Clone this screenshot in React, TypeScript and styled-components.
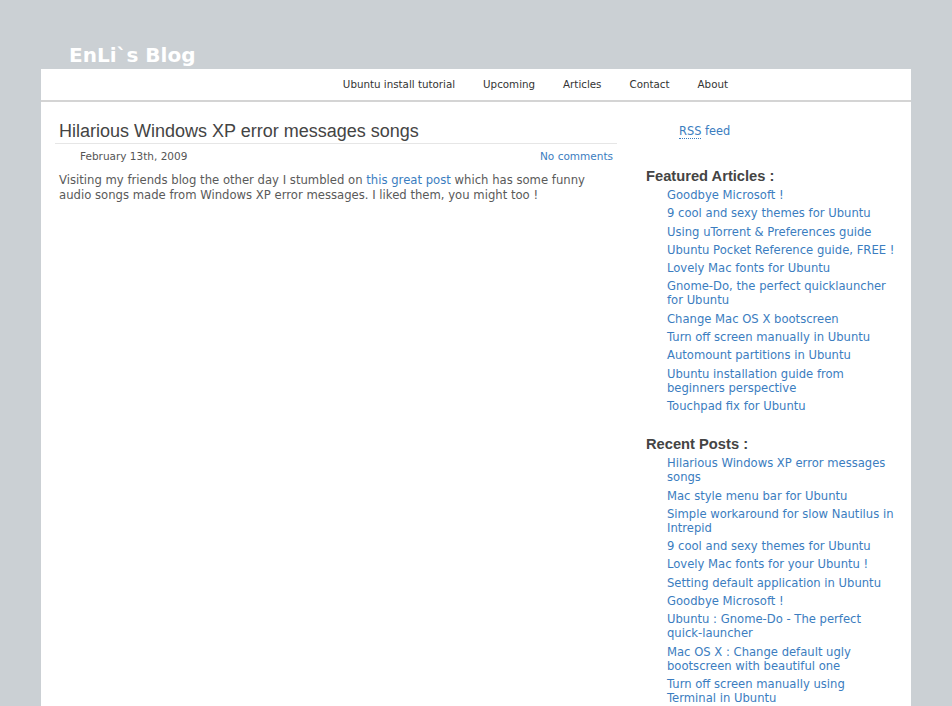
import React from "react";
import styled, { createGlobalStyle } from "styled-components";

const GlobalStyle = createGlobalStyle`
    html, body {
        margin: 0;
        padding: 0;
        background: #cbd0d4;
    }
    body {
        font-family: "DejaVu Sans", Verdana, sans-serif;
    }
`;

const featured = [
    "Goodbye Microsoft !",
    "9 cool and sexy themes for Ubuntu",
    "Using uTorrent & Preferences guide",
    "Ubuntu Pocket Reference guide, FREE !",
    "Lovely Mac fonts for Ubuntu",
    "Gnome-Do, the perfect quicklauncher for Ubuntu",
    "Change Mac OS X bootscreen",
    "Turn off screen manually in Ubuntu",
    "Automount partitions in Ubuntu",
    "Ubuntu installation guide from beginners perspective",
    "Touchpad fix for Ubuntu",
];

const recent = [
    "Hilarious Windows XP error messages songs",
    "Mac style menu bar for Ubuntu",
    "Simple workaround for slow Nautilus in Intrepid",
    "9 cool and sexy themes for Ubuntu",
    "Lovely Mac fonts for your Ubuntu !",
    "Setting default application in Ubuntu",
    "Goodbye Microsoft !",
    "Ubuntu : Gnome-Do - The perfect quick-launcher",
    "Mac OS X : Change default ugly bootscreen with beautiful one",
    "Turn off screen manually using Terminal in Ubuntu",
];

const navItems = ["Ubuntu install tutorial", "Upcoming", "Articles", "Contact", "About"];

const App = () => {
    return (
        <>
            <GlobalStyle />
            <Page>
                <Logo>EnLi`s Blog</Logo>
                <Wrapper>
                    <Nav>
                        {navItems.map(n => <NavLink key={n}>{n}</NavLink>)}
                    </Nav>
                    <Columns>
                        <Main>
                            <PostTitle>Hilarious Windows XP error messages songs</PostTitle>
                            <PostMeta>
                                <span>February 13th, 2009</span>
                                <Link>No comments</Link>
                            </PostMeta>
                            <PostBody>
                                Visiting my friends blog the other day I stumbled on <Link>this great post</Link> which has some funny audio songs made from Windows XP error messages. I liked them, you might too !
                            </PostBody>
                        </Main>
                        <Sidebar>
                            <Rss><Abbr>RSS</Abbr> feed</Rss>
                            <WidgetTitle>Featured Articles :</WidgetTitle>
                            <LinkList>
                                {featured.map(f => <LinkItem key={f}><Link>{f}</Link></LinkItem>)}
                            </LinkList>
                            <WidgetTitle $second>Recent Posts :</WidgetTitle>
                            <LinkList>
                                {recent.map(r => <LinkItem key={r}><Link>{r}</Link></LinkItem>)}
                            </LinkList>
                        </Sidebar>
                    </Columns>
                </Wrapper>
            </Page>
        </>
    );
};

export default App;

const Page = styled.div`
    width: 870px;
    margin: 0 auto;
    padding-top: 42px;
`

const Logo = styled.div`
    font-family: "DejaVu Sans", sans-serif;
    font-weight: bold;
    font-size: 20px;
    color: #ffffff;
    padding-left: 28px;
    height: 27px;
    line-height: 27px;
`

const Wrapper = styled.div`
    background: #ffffff;
    min-height: 700px;
`

const Nav = styled.div`
    display: flex;
    justify-content: flex-end;
    height: 30px;
    align-items: center;
    padding: 0 169px 1px 0;
    border-bottom: 2px solid #d4d4d4;
`

const NavLink = styled.span`
    font-size: 10.3px;
    color: #333;
    padding: 0 14px;
    cursor: pointer;
`

const Columns = styled.div`
    display: flex;
    padding: 0 14px;
    gap: 29px;
`

const Main = styled.div`
    width: 562px;
    flex-shrink: 0;
    padding-top: 19px;
`

const PostTitle = styled.h2`
    font-family: "Liberation Sans", Arial, sans-serif;
    font-weight: normal;
    font-size: 18px;
    line-height: 21px;
    color: #444;
    margin: 0;
    padding: 0 0 1px 4px;
    border-bottom: 1px solid #e6e6e6;
`

const PostMeta = styled.div`
    display: flex;
    justify-content: space-between;
    font-size: 10.5px;
    color: #555;
    padding: 6px 4px 0 25px;
`

const PostBody = styled.p`
    font-size: 11.65px;
    line-height: 15px;
    color: #5a5a5a;
    margin: 11px 0 0 4px;
`

const Link = styled.a`
    color: #3b7dc0;
    text-decoration: none;
    cursor: pointer;
`

const Sidebar = styled.div`
    width: 249px;
    flex-shrink: 0;
    padding-top: 22px;
`

const Rss = styled.div`
    font-size: 11.4px;
    color: #3b7dc0;
    padding-left: 33px;
`

const Abbr = styled.span`
    border-bottom: 1px dotted #3b7dc0;
`

const WidgetTitle = styled.h3<{ $second?: boolean }>`
    font-family: "Liberation Sans", Arial, sans-serif;
    font-size: 14.7px;
    font-weight: bold;
    color: #444;
    margin: ${p => p.$second ? "19px" : "30px"} 0 4px 0;
`

const LinkList = styled.ul`
    list-style: none;
    margin: 0;
    padding: 0 0 0 21px;
`

const LinkItem = styled.li`
    font-size: 11.6px;
    line-height: 14px;
    padding-bottom: 4.3px;
`
